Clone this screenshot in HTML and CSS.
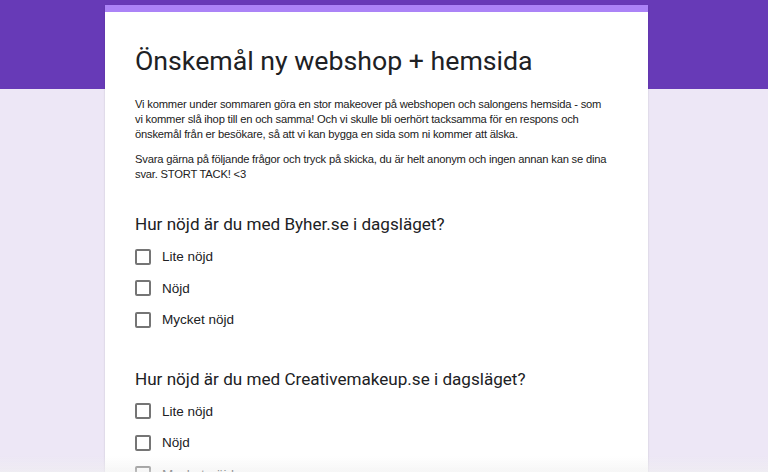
FILE: index.html
```html
<!DOCTYPE html>
<html lang="sv">
<head>
    <meta charset="UTF-8">
    <meta name="viewport" content="width=device-width, initial-scale=1.0">
    <title>Önskemål ny webshop + hemsida</title>
    <link rel="stylesheet" href="styles.css">
</head>
<body>
    <!-- Formulärkort -->
    <div class="form-card">
        <h1 class="form-title">Önskemål ny webshop + hemsida</h1>
        <div class="form-desc">
            <p>Vi kommer under sommaren göra en stor makeover på webshopen och salongens hemsida - som vi kommer slå ihop till en och samma! Och vi skulle bli oerhört tacksamma för en respons och önskemål från er besökare, så att vi kan bygga en sida som ni kommer att älska.</p>
            <p>Svara gärna på följande frågor och tryck på skicka, du är helt anonym och ingen annan kan se dina svar. STORT TACK! &lt;3</p>
        </div>

        <div class="question">
            <h2>Hur nöjd är du med Byher.se i dagsläget?</h2>
            <label class="option"><span class="box"></span>Lite nöjd</label>
            <label class="option"><span class="box"></span>Nöjd</label>
            <label class="option"><span class="box"></span>Mycket nöjd</label>
        </div>

        <div class="question">
            <h2>Hur nöjd är du med Creativemakeup.se i dagsläget?</h2>
            <label class="option"><span class="box"></span>Lite nöjd</label>
            <label class="option"><span class="box"></span>Nöjd</label>
            <label class="option"><span class="box"></span>Mycket nöjd</label>
        </div>
    </div>

    <div class="bottom-fade"></div>
</body>
</html>
```

FILE: styles.css
```css
/* Grund */
* {
    margin: 0;
    padding: 0;
    box-sizing: border-box;
}

body {
    font-family: 'Liberation Sans', Arial, sans-serif;
    color: #212121;
    background: linear-gradient(#673ab7 0, #673ab7 89px, #ede7f6 89px);
    min-height: 100vh;
    overflow: hidden;
    padding-top: 5px;
}

/* Kortet */
.form-card {
    width: 543px;
    margin-left: 105px;
    background: #fff;
    border-top: 7px solid #ab83f7;
    padding: 32px 30px 40px;
    box-shadow: 0 1px 2px rgba(0, 0, 0, 0.15);
}

.form-title {
    font-family: Roboto, sans-serif;
    font-weight: 400;
    font-size: 26.7px;
    line-height: 35px;
    color: #202124;
}

.form-desc {
    margin-top: 18px;
    padding-right: 7px;
    font-size: 11.2px;
    letter-spacing: -0.2px;
    line-height: 15px;
    color: #212121;
}

.form-desc p + p {
    margin-top: 10px;
}

/* Frågor */
.question {
    margin-top: 30px;
}

.question + .question {
    margin-top: 31px;
}

.question h2 {
    font-family: Roboto, sans-serif;
    font-weight: 400;
    font-size: 17.1px;
    line-height: 24px;
    color: #202124;
    margin-bottom: 5px;
}

.option {
    display: flex;
    align-items: center;
    height: 31.5px;
    font-size: 13.5px;
    color: #202124;
}

.option .box {
    width: 16px;
    height: 16px;
    border: 2px solid #757575;
    border-radius: 2px;
    margin-right: 11px;
}

/* Nedtonad kant längst ner */
.bottom-fade {
    position: fixed;
    left: 0;
    right: 0;
    bottom: 0;
    height: 16px;
    background: linear-gradient(rgba(245, 245, 245, 0), rgba(240, 240, 240, 0.6));
}
```
